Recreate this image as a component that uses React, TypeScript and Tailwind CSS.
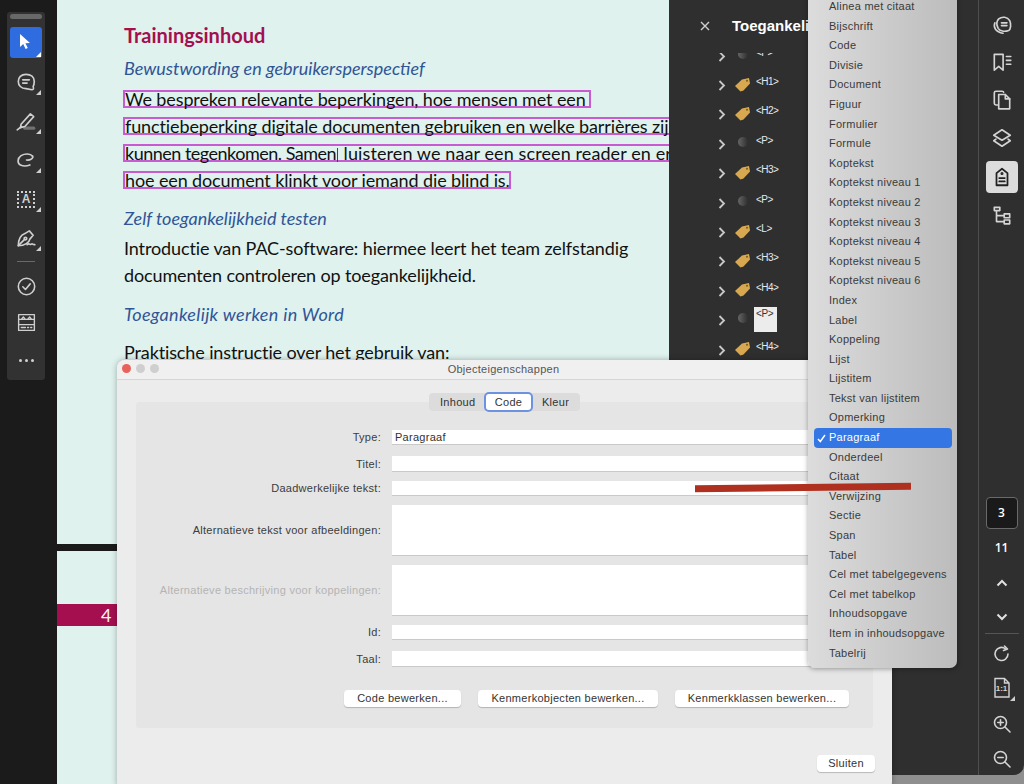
import React from "react";

const S = ({ children, size = 20, sw = 1.5 }: { children: React.ReactNode; size?: number; sw?: number }) => (
  <svg width={size} height={size} viewBox="0 0 20 20" fill="none" stroke="currentColor" strokeWidth={sw} strokeLinecap="round" strokeLinejoin="round">
    {children}
  </svg>
);

const Corner = ({ white }: { white?: boolean }) => (
  <span className={`absolute right-0 bottom-0 w-0 h-0 border-l-[5px] border-l-transparent border-b-[5px] ${white ? "border-b-white" : "border-b-[#cfcfcf]"}`} />
);

const LeftTool = ({ children, corner = true, mb = "mb-[13px]" }: { children: React.ReactNode; corner?: boolean; mb?: string }) => (
  <div className={`relative w-[30px] h-[26px] ${mb} flex items-center justify-center text-[#cfcfcf]`}>
    {children}
    {corner && <Corner />}
  </div>
);

const RailIcon = ({ children, h = 37.5 }: { children: React.ReactNode; h?: number }) => (
  <div className="flex items-center justify-center text-[#d4d4d4] w-full" style={{ height: h }}>
    {children}
  </div>
);

const Tag = () => (
  <svg width="17" height="15" viewBox="0 0 17 15" className="mx-auto">
    <path d="M1 9 L8 2.5 L15 1 L16 6.5 L9.5 13.5 L6.5 14.5 Z" fill="#d8a850" />
    <circle cx="13" cy="3.8" r="1" fill="#7a5a20" />
  </svg>
);

const Dot = () => (
  <span className="block mx-auto -mt-[2px] w-[10px] h-[10px] rounded-full bg-gradient-to-r from-[#666666] to-[#2f2f2f]" />
);

const rows: [string, boolean][] = [
  ["<P>", false], ["<H1>", true], ["<H2>", true], ["<P>", false], ["<H3>", true], ["<P>", false],
  ["<L>", true], ["<H3>", true], ["<H4>", true], ["<P>", false], ["<H4>", true],
];

const menu = [
  "Alinea met citaat", "Bijschrift", "Code", "Divisie", "Document", "Figuur", "Formulier", "Formule", "Koptekst",
  "Koptekst niveau 1", "Koptekst niveau 2", "Koptekst niveau 3", "Koptekst niveau 4", "Koptekst niveau 5", "Koptekst niveau 6",
  "Index", "Label", "Koppeling", "Lijst", "Lijstitem", "Tekst van lijstitem", "Opmerking", "Paragraaf", "Onderdeel", "Citaat",
  "Verwijzing", "Sectie", "Span", "Tabel", "Cel met tabelgegevens", "Cel met tabelkop", "Inhoudsopgave", "Item in inhoudsopgave", "Tabelrij",
];

const Field = ({ label, h, mt, value, muted }: { label: string; h: string; mt: string; value?: string; muted?: boolean }) => (
  <div className={`flex items-center ${mt}`}>
    <div className={`w-[256px] shrink-0 text-right pr-[11px] leading-[13px] ${muted ? "text-[#b4b4b4]" : "text-[#3c3c3c]"}`}>{label}</div>
    <div className={`w-[463px] ${h} bg-white border-b border-[#c9c9c9] pl-[3px] text-[#333] leading-[15px]`}>{value}</div>
  </div>
);

const MacBtn = ({ children, w }: { children: React.ReactNode; w: string }) => (
  <div className={`${w} h-[17px] bg-white rounded-[4px] shadow-[0_1px_1px_rgba(0,0,0,0.22)] flex items-center justify-center text-[#333] text-[11px]`}>
    {children}
  </div>
);

const BoxLine = ({ children, w }: { children: React.ReactNode; w: string }) => (
  <div className={`${w} -ml-[1px] h-[18px] mb-[9px] border-2 border-[#c85ad2] box-border leading-[14px] whitespace-nowrap`}>{children}</div>
);

export default function App() {
  return (
    <div className="relative w-[1024px] h-[784px] overflow-hidden bg-[#8f8f8f] flex" style={{ fontFamily: '"Liberation Sans", Arial, sans-serif' }}>
      {/* left bar */}
      <div className="w-[57px] h-full bg-[#1b1b1b] shrink-0 pl-[7px] pt-[12px]">
        <div className="w-[38px] h-[368px] bg-[#323232] rounded-[3px] flex flex-col items-center pt-[2px]">
          <div className="w-[32px] h-[5px] rounded-sm bg-[#686868] mb-[8px]" />
          <div className="relative w-[32px] h-[31px] bg-[#2f6ce0] rounded-[3px] flex items-center justify-center mb-[11px]">
            <svg width="14" height="18" viewBox="0 0 14 18" className="-mt-[2px] -ml-[3px]"><path d="M2 1 L2 14 L5.2 11 L7.6 16 L9.8 15 L7.4 10.2 L12 10 Z" fill="#fff" /></svg>
            <span className="absolute right-[1px] bottom-[1px]"><Corner white /></span>
          </div>
          <LeftTool>
            <S size={22}><path d="M10 3 C5.5 3 3 6 3 9.5 C3 13 5.5 16 10 16 L15.5 17 C17 17 17 16 16.5 14 C17.5 12.5 17.5 11 17.5 9.5 C17.5 5.5 14.5 3 10 3 Z" /><path d="M7 8h6M7 11h4" /></S>
          </LeftTool>
          <LeftTool>
            <S size={22}><path d="M5.5 13 L14 3.5 L17 6 L9 15 L5 16 Z" /><path d="M2 18 L6 15" /><path d="M9 16.5 h8" strokeWidth="3" className="opacity-40" /></S>
          </LeftTool>
          <LeftTool>
            <S size={22}><path d="M16 6.5 C14 4 9 4 5.5 6 C2 8.5 2 13 5 14.5 C8 16 11 15.5 13.5 14.5" /><path d="M16 6.5 C17 9 13 10.5 10.5 10" /></S>
          </LeftTool>
          <LeftTool>
            <div className="relative w-[18px] h-[17px] border-2 border-dotted border-[#cfcfcf] flex items-center justify-center text-[12px] font-bold leading-none">A</div>
          </LeftTool>
          <LeftTool mb="mb-[10px]">
            <S size={22}><path d="M3 17 C3 11 5 7.5 9 6 L13 3.5 L16.5 7.5 L13.5 11 C13 14 9 17 3 17 Z" /><path d="M3 17 L8.5 11.5" /><circle cx="9.5" cy="10.5" r="1.2" /><path d="M11 16 C13 14 14 17 15 15.5 C16 14.5 16 16.5 18 16" /></S>
          </LeftTool>
          <div className="w-[18px] h-px bg-[#6a6a6a] mb-[11px]" />
          <LeftTool corner={false} mb="mb-[10px]">
            <S size={21}><circle cx="10" cy="10" r="7.8" /><path d="M6.5 10.3 L9 12.8 L13.5 7.5" /></S>
          </LeftTool>
          <LeftTool corner={false}>
            <S size={21} sw={1.3}><rect x="2.5" y="2.5" width="15" height="15" /><path d="M2.5 7 H17.5 M2.5 12 H17.5 M5 7 L7 4.8 L9 7 M11 7 L13 4.8 L15 7 M5 14.8 H9 M11 14.8h1 M14 14.8h1" /></S>
          </LeftTool>
          <div className="flex gap-[3px] mt-[11px]">
            <span className="w-[3px] h-[3px] rounded-full bg-[#d0d0d0]" />
            <span className="w-[3px] h-[3px] rounded-full bg-[#d0d0d0]" />
            <span className="w-[3px] h-[3px] rounded-full bg-[#d0d0d0]" />
          </div>
        </div>
      </div>

      {/* document */}
      <div className="w-[612px] h-full bg-[#dff2ee] shrink-0 overflow-hidden relative" style={{ fontFamily: 'Lato, "Noto Sans", sans-serif' }}>
        <div className="pl-[67px] pt-[23px]">
          <div className="text-[20px] leading-[24px] font-bold text-[#a50f4f]">Trainingsinhoud</div>
          <div className="mt-[9px] text-[18px] leading-[24px] italic text-[#2f5597]">Bewustwording en gebruikersperspectief</div>
          <div className="mt-[10px] text-[18px] text-[#111] tracking-[-0.12px]">
            <BoxLine w="w-[468px]">We bespreken relevante beperkingen, hoe mensen met een</BoxLine>
            <BoxLine w="w-[560px]">functiebeperking digitale documenten gebruiken en welke barrières zij</BoxLine>
            <BoxLine w="w-[560px]"><span className="tracking-[-0.5px]">kunnen tegenkomen. Samen</span><span className="inline-block w-px h-[14px] bg-[#444] mx-[1px] align-middle" /> <span className="tracking-[0.1px]">luisteren we naar een screen reader en ervaren</span></BoxLine>
            <BoxLine w="w-[388px]">hoe een document klinkt voor iemand die blind is.</BoxLine>
          </div>
          <div className="mt-[17px] text-[18px] leading-[24px] italic text-[#2f5597]">Zelf toegankelijkheid testen</div>
          <div className="mt-[5px] text-[18px] leading-[27px] text-[#111] tracking-[-0.12px] whitespace-nowrap">
            Introductie van PAC-software: hiermee leert het team zelfstandig
            <br />
            documenten controleren op toegankelijkheid.
          </div>
          <div className="mt-[13px] text-[18px] leading-[24px] italic text-[#2f5597] tracking-[0.33px]">Toegankelijk werken in Word</div>
          <div className="mt-[14px] text-[18px] leading-[24px] text-[#111] tracking-[-0.12px]">Praktische instructie over het gebruik van:</div>
        </div>
        <div className="absolute left-0 top-[544px] w-full h-[7px] bg-[#1a1a1a]" />
        <div className="absolute left-0 top-[604px] w-full h-[22px] bg-[#a50f4f] text-[#f5f5f5] text-[18px] leading-[22px] pl-[44px]">4</div>
      </div>

      {/* tags panel + rail */}
      <div className="flex-1 h-[775px] bg-[#2f2f2f] rounded-br-[10px] flex overflow-hidden">
        <div className="w-[309px] shrink-0 text-white">
          <div className="h-[53px] flex items-start pl-[31px] pt-[21px]">
            <svg width="10" height="10" viewBox="0 0 10 10" stroke="#d0d0d0" strokeWidth="1.4"><path d="M1 1 L9 9 M9 1 L1 9" /></svg>
            <span className="ml-[22px] -mt-[4px] text-[15px] leading-[18px] font-bold whitespace-nowrap">Toegankelijkheid</span>
          </div>
          <div className="overflow-hidden h-[340px]">
            <div className="-mt-[11px]">
              {rows.map(([t, tag], i) => (
                <div key={i} className="relative h-[29.4px] flex items-center pl-[49px]">
                  <svg width="8" height="11" viewBox="0 0 8 11" fill="none" stroke="#c8c8c8" strokeWidth="1.8" className="-mt-[1px]"><path d="M1.5 1 L6 5.5 L1.5 10" /></svg>
                  <span className="w-[17px] ml-[8px] -mt-[4px]">{tag ? <Tag /> : <Dot />}</span>
                  {i === 9 ? (
                    <span className="ml-[3px] -mt-[4px] w-[23px] h-[25px] bg-[#ececec] text-[#333] text-[10px] leading-[14px] pl-[2px] tracking-[-0.4px]">{t}</span>
                  ) : (
                    <span className="ml-[3px] -mt-[8px] px-[2px] text-[10px] leading-[12px] text-[#e8e8e8] tracking-[-0.5px]">{t}</span>
                  )}
                </div>
              ))}
            </div>
          </div>
        </div>
        <div className="flex-1 border-l border-[#4e4e4e] flex flex-col items-center pt-[6px] pb-[2px]">
          <RailIcon>
            <S size={22}><path d="M7 4.5 C10 2 15 2.5 17 6 C18.5 9 18 14 16 15 C12 16.5 8 15.5 6.5 13 C5 10 5 6.5 7 4.5 Z" /><path d="M3.5 8 C2 12 4 16.5 11 17.5" /><path d="M9.5 8h5M9.5 10.5h5" /></S>
          </RailIcon>
          <RailIcon>
            <S size={22}><path d="M3 3 H11 V17.5 L7 14 L3 17.5 Z" /><path d="M14 5h4M14 8.5h4M14 12h4" /></S>
          </RailIcon>
          <RailIcon h={38}>
            <S size={22}><path d="M6 14.5 H4.5 C3.5 14.5 3 14 3 13 V3.5 C3 2.5 3.5 2 4.5 2 H10 C11 2 11.5 2.5 11.5 3" /><path d="M7 5 H13 L17 9 V18 H7 Z" /><path d="M13 5 V9 H17" /></S>
          </RailIcon>
          <RailIcon>
            <S size={22}><path d="M10 2.5 L17.5 7.5 L10 12 L2.5 7.5 Z" /><path d="M4.5 11 L2.5 12.5 L10 17.5 L17.5 12.5 L15.5 11" /></S>
          </RailIcon>
          <div className="w-[32px] h-[32px] rounded-[4px] bg-[#dcdcdc] text-[#222] flex items-center justify-center mt-[4px] mb-[2px]">
            <S size={22} sw={1.6}><path d="M10 2.5 L15 6.5 V17.5 H5 V6.5 Z" /><circle cx="10" cy="6.8" r="0.6" /><path d="M7.5 11h5M7.5 14h5" /></S>
          </div>
          <RailIcon h={40}>
            <S size={22}><path d="M3 3 H8 V6 H3 Z M5 6 V16 H12 M5 10.5 H12" /><path d="M12 9 H17 V12.5 H12 Z M12 14.5 H17 V18 H12 Z" /></S>
          </RailIcon>
          <div className="flex-1" />
          <div className="w-[32px] h-[32px] rounded-[4px] bg-[#1a1a1a] border border-[#6a6a6a] text-white text-[12px] font-semibold flex items-center justify-center" style={{ fontFamily: '"Open Sans", sans-serif' }}>3</div>
          <div className="mt-[11px] text-white text-[12px] font-semibold leading-[16px]" style={{ fontFamily: '"Open Sans", sans-serif' }}>11</div>
          <div className="mt-[23px] mb-[26px]">
            <svg width="12" height="8" viewBox="0 0 12 8" fill="none" stroke="#e0e0e0" strokeWidth="2"><path d="M1.5 6.5 L6 2 L10.5 6.5" /></svg>
          </div>
          <div className="mb-[12px]">
            <svg width="12" height="8" viewBox="0 0 12 8" fill="none" stroke="#e0e0e0" strokeWidth="2"><path d="M1.5 1.5 L6 6 L10.5 1.5" /></svg>
          </div>
          <div className="w-[34px] h-px bg-[#555]" />
          <RailIcon h={39}>
            <S size={20} sw={1.6}><path d="M16 10 A6.5 6.5 0 1 1 13.5 4.8" /><path d="M12.5 2 L15.5 5 L11.5 6.5" /></S>
          </RailIcon>
          <div className="relative">
            <RailIcon h={30}>
              <svg width="18" height="22" viewBox="0 0 18 22" fill="none" stroke="currentColor" strokeWidth="1.4"><path d="M2 1.5 H11.5 L16 6 V20 H2 Z M11.5 1.5 V6 H16" /></svg>
            </RailIcon>
            <span className="absolute left-1/2 -translate-x-1/2 top-[10px] text-[8px] font-bold text-[#d4d4d4]">1:1</span>
            <span className="absolute -right-[4px] bottom-[2px]"><Corner /></span>
          </div>
          <RailIcon h={42}>
            <S size={20} sw={1.6}><circle cx="8.5" cy="8.5" r="6" /><path d="M13 13 L18 18 M5.8 8.5h5.4M8.5 5.8v5.4" /></S>
          </RailIcon>
          <RailIcon h={28}>
            <S size={20} sw={1.6}><circle cx="8.5" cy="8.5" r="6" /><path d="M13 13 L18 18 M5.8 8.5h5.4" /></S>
          </RailIcon>
        </div>
      </div>

      {/* properties dialog */}
      <div className="absolute left-[117px] top-[360px] w-[775px] h-[430px] bg-[#ececec] rounded-[8px] shadow-[0_0_6px_rgba(0,0,0,0.3)] text-[11px] tracking-[0.28px]" style={{ fontFamily: '"Liberation Sans", Arial, sans-serif' }}>
        <div className="h-[20px] border-b border-[#d6d6d6] bg-[#f0f0f0] rounded-t-[8px] relative flex items-center justify-center text-[#555]">
          <div className="absolute left-[5px] top-[4px] flex gap-[5px]">
            <span className="w-[9px] h-[9px] rounded-full bg-[#e8625c]" />
            <span className="w-[9px] h-[9px] rounded-full bg-[#cfcfcf]" />
            <span className="w-[9px] h-[9px] rounded-full bg-[#cfcfcf]" />
          </div>
          <span className="ml-[-2px]">Objecteigenschappen</span>
        </div>
        <div className="flex justify-center mt-[13px] relative z-10">
          <div className="h-[18px] w-[151px] bg-[#dcdcdc] rounded-[4px] flex items-center text-[#333]">
            <span className="w-[55px] pl-[11px]">Inhoud</span>
            <span className="w-[49px] h-[20px] bg-white rounded-[5px] border-2 border-[#6d92e0] flex items-center justify-center">Code</span>
            <span className="pl-[9px]">Kleur</span>
          </div>
        </div>
        <div className="mx-[19px] -mt-[9px] h-[326px] bg-[#e5e5e5] rounded-[3px] pt-[28px]">
          <Field label="Type:" h="h-[15px]" mt="mt-0" value="Paragraaf" />
          <Field label="Titel:" h="h-[16px]" mt="mt-[11px]" />
          <Field label="Daadwerkelijke tekst:" h="h-[15px]" mt="mt-[9px]" />
          <Field label="Alternatieve tekst voor afbeeldingen:" h="h-[51px]" mt="mt-[9px]" />
          <Field label="Alternatieve beschrijving voor koppelingen:" h="h-[51px]" mt="mt-[9px]" muted />
          <Field label="Id:" h="h-[15px]" mt="mt-[9px]" />
          <Field label="Taal:" h="h-[16px]" mt="mt-[11px]" />
          <div className="flex gap-[17px] ml-[208px] mt-[23px]">
            <MacBtn w="w-[117px]">Code bewerken...</MacBtn>
            <MacBtn w="w-[180px]">Kenmerkobjecten bewerken...</MacBtn>
            <MacBtn w="w-[174px]">Kenmerkklassen bewerken...</MacBtn>
          </div>
        </div>
        <div className="flex justify-end pr-[17px] mt-[27px]">
          <MacBtn w="w-[58px]">Sluiten</MacBtn>
        </div>
      </div>

      {/* dropdown menu */}
      <div className="absolute left-[808px] -top-[6px] w-[149px] h-[674px] rounded-b-[7px] bg-gradient-to-r from-[#dcdcdc] to-[#bcbcbc] shadow-[0_1px_5px_rgba(0,0,0,0.35)] pl-[6px] pr-[5px] pt-[3px] text-[11px] text-[#3a3a3a] tracking-[0.25px]">
        {menu.map((m) =>
          m === "Paragraaf" ? (
            <div key={m} className="h-[19.6px] leading-[19.6px] bg-[#3477e4] rounded-[4px] text-white pl-[15px] relative">
              <svg width="9" height="9" viewBox="0 0 9 9" fill="none" stroke="#fff" strokeWidth="1.5" className="absolute left-[3px] top-[6px]"><path d="M1 5 L3.3 7.5 L8 1" /></svg>
              {m}
            </div>
          ) : (
            <div key={m} className="h-[19.6px] leading-[19.6px] pl-[15px] whitespace-nowrap">{m}</div>
          )
        )}
      </div>

      {/* annotation stroke */}
      <div className="absolute left-[695px] top-[484px] w-[216px] h-[7px] bg-[#b03020] rotate-[-0.6deg]" />
    </div>
  );
}
